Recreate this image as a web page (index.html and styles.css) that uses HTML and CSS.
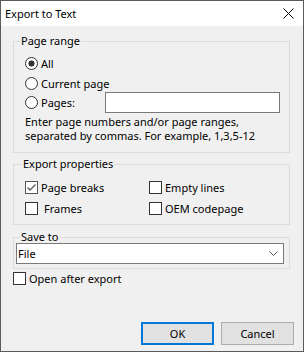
FILE: index.html
```html
<!DOCTYPE html>
<html lang="en">
<head>
    <meta charset="UTF-8">
    <title>Export to Text</title>
    <link rel="stylesheet" href="styles.css">
</head>
<body>
    <div class="dialog">
        <div class="titlebar">
            <span class="title">Export to Text</span>
            <svg class="close" width="11" height="11" viewBox="0 0 11 11">
                <path d="M0.5 0.5L10.5 10.5M10.5 0.5L0.5 10.5" stroke="#000" stroke-width="1"/>
            </svg>
        </div>

        <fieldset class="group range">
            <legend>Page range</legend>
            <div class="inner">
                <div class="row"><span class="radio checked"></span><span class="lbl">All</span></div>
                <div class="row"><span class="radio"></span><span class="lbl">Current page</span></div>
                <div class="row pages"><span class="radio"></span><span class="lbl pages-lbl">Pages:</span><span class="textbox"></span></div>
                <p class="hint">Enter page numbers and/or page ranges,<br>separated by commas. For example, 1,3,5-12</p>
            </div>
        </fieldset>

        <fieldset class="group props">
            <legend>Export properties</legend>
            <div class="inner grid">
                <div class="row"><span class="check on"><svg width="11" height="11" viewBox="0 0 11 11"><path d="M1.5 5.5L4 8L9.5 2.5" fill="none" stroke="#555" stroke-width="1.3"/></svg></span><span class="lbl">Page breaks</span></div>
                <div class="row"><span class="check"></span><span class="lbl">Empty lines</span></div>
                <div class="row"><span class="check"></span><span class="lbl wide">Frames</span></div>
                <div class="row"><span class="check"></span><span class="lbl">OEM codepage</span></div>
            </div>
        </fieldset>

        <fieldset class="group save">
            <legend>Save to</legend>
            <div class="select">
                <span>File</span>
                <svg width="9" height="6" viewBox="0 0 9 6"><path d="M0.5 0.5L4.5 4.5L8.5 0.5" fill="none" stroke="#555" stroke-width="1"/></svg>
            </div>
        </fieldset>

        <div class="row open"><span class="check"></span><span class="lbl">Open after export</span></div>

        <div class="buttons">
            <button class="btn default">OK</button>
            <button class="btn">Cancel</button>
        </div>
    </div>
</body>
</html>
```

FILE: styles.css
```css
* {
    box-sizing: border-box;
}
body {
    margin: 0;
    font-family: "Noto Sans", "Open Sans", sans-serif;
    font-size: 11px;
    color: #000;
}
.dialog {
    width: 304px;
    height: 352px;
    border: 1px solid #5b5b5b;
    background: #f0f0f0;
    display: flex;
    flex-direction: column;
}
.titlebar {
    height: 25px;
    flex: none;
    background: #fff;
    display: flex;
    align-items: center;
    padding-left: 4px;
}
.title {
    flex: 1;
    font-size: 11px;
}
.close {
    margin-right: 9px;
}
.group {
    margin: 8px 13px 0 12px;
    padding: 0;
    border: 1px solid #dcdcdc;
    min-width: 0;
    flex: none;
}
.group legend {
    padding: 0 1px;
    margin-left: 6px;
    line-height: 14px;
}
.inner {
    padding: 5px 0 9px 11px;
}
.row {
    display: flex;
    align-items: center;
    height: 20px;
}
.radio {
    width: 13px;
    height: 13px;
    border: 1px solid #333;
    border-radius: 50%;
    background: #fff;
    flex: none;
}
.radio.checked {
    background: radial-gradient(circle, #333 0 2.8px, #fff 3.3px);
}
.lbl {
    margin-left: 3px;
    white-space: nowrap;
}
.pages {
    height: 21px;
    margin-top: -1px;
}
.pages-lbl {
    width: 64px;
}
.textbox {
    width: 175px;
    height: 21px;
    background: #fff;
    border: 1px solid #7a7a7a;
}
.hint {
    margin: 2px 0 0;
    line-height: 14px;
}
.props {
    margin-top: 4px;
}
.props legend {
    margin-left: 8px;
}
.grid {
    display: grid;
    grid-template-columns: 124px 1fr;
    padding: 6px 0 5px 11px;
}
.grid .row {
    height: 21px;
}
.check {
    width: 13px;
    height: 13px;
    border: 1px solid #333;
    background: #fff;
    flex: none;
    display: flex;
}
.check.on {
    border-color: #555;
}
.lbl.wide {
    margin-left: 6px;
}
.save {
    margin-top: 6px;
}
.save legend {
    line-height: 12px;
}
.select {
    margin: 0 5px 4px 2px;
    height: 21px;
    background: #fff;
    border: 1px solid #7a7a7a;
    display: flex;
    align-items: center;
    justify-content: space-between;
    padding: 0 5px 0 1px;
}
.open {
    margin: 3px 0 0 12px;
    height: 13px;
}
.buttons {
    margin-top: auto;
    margin-bottom: 6px;
    margin-right: 9px;
    display: flex;
    justify-content: flex-end;
    gap: 7px;
}
.btn {
    width: 73px;
    height: 23px;
    font-family: inherit;
    font-size: 11px;
    color: #000;
    background: #e1e1e1;
    border: 1px solid #adadad;
    padding: 0;
}
.btn.default {
    border: 2px solid #0078d7;
}
```
